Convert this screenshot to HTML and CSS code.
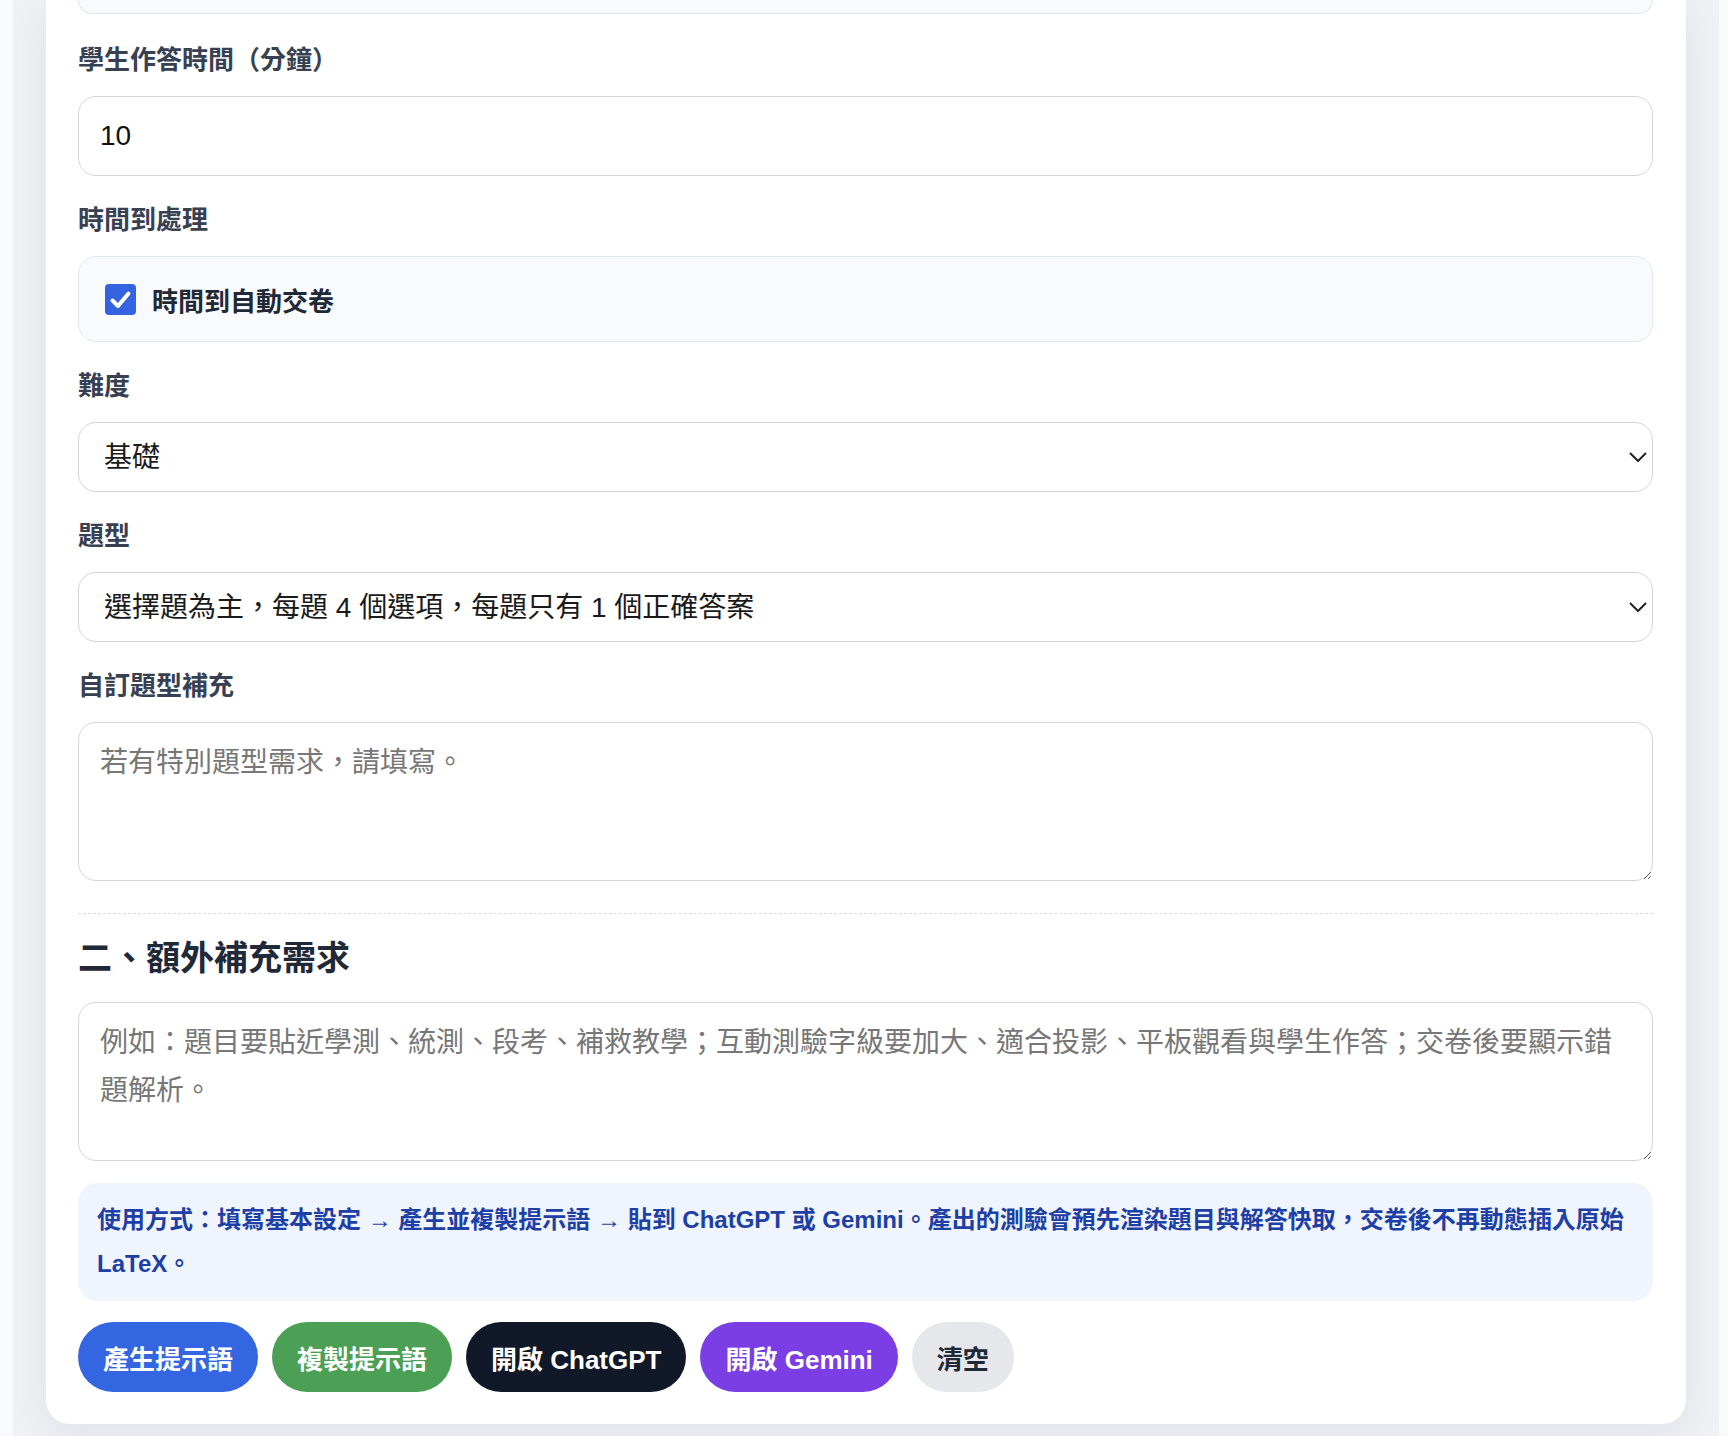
FILE: index.html
```html
<!DOCTYPE html>
<html lang="zh-Hant">
<head>
    <meta charset="UTF-8">
    <meta name="viewport" content="width=device-width, initial-scale=1.0">
    <title>互動測驗提示語產生器</title>
    <link rel="stylesheet" href="styles.css">
</head>
<body>
    <div class="shell">
        <main class="card">
            <div class="prev-field"></div>

            <div class="field">
                <label class="field-label" for="minutes">學生作答時間（分鐘）</label>
                <input class="text-input" id="minutes" type="number" value="10">
            </div>

            <div class="field">
                <div class="field-label">時間到處理</div>
                <label class="check-row">
                    <input class="check-input" type="checkbox" checked>
                    <span class="check-box">
                        <svg width="31" height="31" viewBox="0 0 31 31">
                            <path d="M7.5 16.5 L13 22 L23.5 9.5" fill="none" stroke="#fff" stroke-width="4" stroke-linecap="round" stroke-linejoin="round"/>
                        </svg>
                    </span>
                    時間到自動交卷
                </label>
            </div>

            <div class="field">
                <label class="field-label" for="level">難度</label>
                <div class="select-wrap">
                    <select class="select-input" id="level">
                        <option>基礎</option>
                        <option>中等</option>
                        <option>進階</option>
                    </select>
                    <svg class="chevron" width="18" height="11" viewBox="0 0 18 11">
                        <path d="M1.5 1.5 L9 9 L16.5 1.5" fill="none" stroke="#222" stroke-width="2" stroke-linecap="round" stroke-linejoin="round"/>
                    </svg>
                </div>
            </div>

            <div class="field">
                <label class="field-label" for="qtype">題型</label>
                <div class="select-wrap">
                    <select class="select-input" id="qtype">
                        <option>選擇題為主，每題 4 個選項，每題只有 1 個正確答案</option>
                        <option>是非題</option>
                        <option>混合題型</option>
                    </select>
                    <svg class="chevron" width="18" height="11" viewBox="0 0 18 11">
                        <path d="M1.5 1.5 L9 9 L16.5 1.5" fill="none" stroke="#222" stroke-width="2" stroke-linecap="round" stroke-linejoin="round"/>
                    </svg>
                </div>
            </div>

            <div class="field field-last">
                <label class="field-label" for="custom">自訂題型補充</label>
                <textarea class="text-area" id="custom" placeholder="若有特別題型需求，請填寫。"></textarea>
            </div>

            <div class="divider"></div>

            <h2 class="section-title">二、額外補充需求</h2>
            <textarea class="text-area" placeholder="例如：題目要貼近學測、統測、段考、補救教學；互動測驗字級要加大、適合投影、平板觀看與學生作答；交卷後要顯示錯題解析。"></textarea>

            <p class="info-box">使用方式：填寫基本設定 → 產生並複製提示語 → 貼到 ChatGPT 或 Gemini。產出的測驗會預先渲染題目與解答快取，交卷後不再動態插入原始 LaTeX。</p>

            <div class="button-row">
                <button class="btn btn-blue">產生提示語</button>
                <button class="btn btn-green">複製提示語</button>
                <button class="btn btn-dark">開啟 ChatGPT</button>
                <button class="btn btn-purple">開啟 Gemini</button>
                <button class="btn btn-light">清空</button>
            </div>
        </main>
    </div>
</body>
</html>
```

FILE: styles.css
```css
* {
    margin: 0;
    padding: 0;
    box-sizing: border-box;
}

body {
    font-family: "Liberation Sans", "Noto Sans CJK TC", sans-serif;
    background-color: #f9fafb;
    color: #1f2937;
}

.shell {
    margin: 0 9px 0 13px;
    padding: 0 33px 13px 33px;
    background-color: #eff1f5;
}

.card {
    background-color: #fff;
    border-radius: 0 0 24px 24px;
    padding: 0 33px 32px 32px;
    box-shadow: 0 10px 40px rgba(15, 23, 42, 0.07);
}

.prev-field {
    height: 14px;
    background-color: #f8fafc;
    border: 1px solid #dde6f4;
    border-top: none;
    border-radius: 0 0 18px 18px;
    margin-bottom: 28px;
}

.field {
    margin-bottom: 26px;
}

.field-last {
    margin-bottom: 0;
}

.field-label {
    display: block;
    font-size: 26px;
    font-weight: bold;
    line-height: 36px;
    color: #374151;
    margin-bottom: 18px;
}

.text-input,
.select-input,
.text-area {
    display: block;
    width: 100%;
    font-family: inherit;
    font-size: 28px;
    color: #111;
    background-color: #fff;
    border: 1px solid #d4d5dc;
    border-radius: 18px;
    outline: none;
}

.text-input {
    height: 80px;
    padding: 0 21px;
}

.select-wrap {
    position: relative;
}

.select-input {
    height: 70px;
    padding: 0 40px 0 25px;
    appearance: none;
    -webkit-appearance: none;
    color: #1a1a1a;
}

.chevron {
    position: absolute;
    right: 6px;
    top: 30px;
    pointer-events: none;
}

.text-area {
    height: 159px;
    padding: 16px 21px;
    line-height: 1.7;
    resize: vertical;
}

.text-area::placeholder {
    color: #777;
}

.check-row {
    display: flex;
    align-items: center;
    gap: 16px;
    height: 86px;
    padding-left: 26px;
    background-color: #f8fafc;
    border: 1px solid #e2e8f2;
    border-radius: 18px;
    font-size: 26px;
    font-weight: bold;
    color: #1f2937;
}

.check-input {
    display: none;
}

.check-box {
    display: flex;
    width: 31px;
    height: 31px;
    border-radius: 4px;
    background-color: #3564e0;
}

.divider {
    margin-top: 32px;
    border-top: 1px dashed #d9dde3;
}

.section-title {
    font-size: 34px;
    line-height: 44px;
    font-weight: bold;
    color: #1f2937;
    margin: 22px 0;
}

.info-box {
    margin-top: 22px;
    padding: 15px 19px;
    background-color: #eff4fd;
    border-radius: 20px;
    font-size: 24px;
    font-weight: bold;
    line-height: 44px;
    color: #1e3fa6;
}

.button-row {
    display: flex;
    gap: 14px;
    margin-top: 21px;
}

.btn {
    height: 70px;
    padding: 0 25px;
    border: none;
    border-radius: 35px;
    font-family: inherit;
    font-size: 26px;
    font-weight: bold;
    color: #fff;
    cursor: pointer;
}

.btn-blue {
    background-color: #3566e2;
}

.btn-green {
    background-color: #4ca055;
}

.btn-dark {
    background-color: #111827;
}

.btn-purple {
    background-color: #7b3ee4;
}

.btn-light {
    background-color: #e5e7eb;
    color: #1f2937;
}
```
